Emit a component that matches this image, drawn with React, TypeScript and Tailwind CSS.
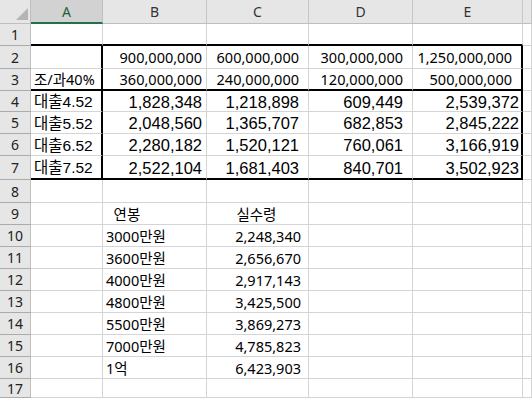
import React from "react";

const ROW_H = [22, 23, 22, 21, 22, 22, 24, 23, 22, 22, 22, 22, 22, 22, 22, 22, 19];
const COLS = ["A", "B", "C", "D", "E", ""];

type Cell = { t?: string; align?: "l" | "r"; pr?: number; kind?: "a" | "b" | "k" };

const body = "font-['Noto_Sans','Noto_Sans_CJK_KR',sans-serif] text-[14.5px]";
const big = "font-['Liberation_Sans','Noto_Sans_CJK_KR',sans-serif] text-[16.5px]";
const label = "font-['Liberation_Sans','Noto_Sans_CJK_KR',sans-serif] text-[15.5px]";

const blank: Cell[] = [{}, {}, {}, {}, {}, {}];

const rows: Cell[][] = [
  blank,
  [{}, { t: "900,000,000", align: "r", pr: 4 }, { t: "600,000,000", align: "r", pr: 9 }, { t: "300,000,000", align: "r", pr: 9 }, { t: "1,250,000,000", align: "r", pr: 9 }, {}],
  [{ t: "조/과40%" }, { t: "360,000,000", align: "r", pr: 4 }, { t: "240,000,000", align: "r", pr: 9 }, { t: "120,000,000", align: "r", pr: 9 }, { t: "500,000,000", align: "r", pr: 9 }, {}],
  [{ t: "대출4.52", kind: "k" }, { t: "1,828,348", align: "r", pr: 4, kind: "b" }, { t: "1,218,898", align: "r", pr: 9, kind: "b" }, { t: "609,449", align: "r", pr: 9, kind: "b" }, { t: "2,539,372", align: "r", pr: 2, kind: "b" }, {}],
  [{ t: "대출5.52", kind: "k" }, { t: "2,048,560", align: "r", pr: 4, kind: "b" }, { t: "1,365,707", align: "r", pr: 9, kind: "b" }, { t: "682,853", align: "r", pr: 9, kind: "b" }, { t: "2,845,222", align: "r", pr: 2, kind: "b" }, {}],
  [{ t: "대출6.52", kind: "k" }, { t: "2,280,182", align: "r", pr: 4, kind: "b" }, { t: "1,520,121", align: "r", pr: 9, kind: "b" }, { t: "760,061", align: "r", pr: 9, kind: "b" }, { t: "3,166,919", align: "r", pr: 2, kind: "b" }, {}],
  [{ t: "대출7.52", kind: "k" }, { t: "2,522,104", align: "r", pr: 4, kind: "b" }, { t: "1,681,403", align: "r", pr: 9, kind: "b" }, { t: "840,701", align: "r", pr: 9, kind: "b" }, { t: "3,502,923", align: "r", pr: 2, kind: "b" }, {}],
  blank,
  [{}, { t: "\u00a0\u00a0연봉" }, { t: "\u00a0\u00a0\u00a0\u00a0\u00a0\u00a0\u00a0실수령" }, {}, {}, {}],
  [{}, { t: "3000만원" }, { t: "2,248,340", align: "r", pr: 7 }, {}, {}, {}],
  [{}, { t: "3600만원" }, { t: "2,656,670", align: "r", pr: 7 }, {}, {}, {}],
  [{}, { t: "4000만원" }, { t: "2,917,143", align: "r", pr: 7 }, {}, {}, {}],
  [{}, { t: "4800만원" }, { t: "3,425,500", align: "r", pr: 7 }, {}, {}, {}],
  [{}, { t: "5500만원" }, { t: "3,869,273", align: "r", pr: 7 }, {}, {}, {}],
  [{}, { t: "7000만원" }, { t: "4,785,823", align: "r", pr: 7 }, {}, {}, {}],
  [{}, { t: "1억" }, { t: "6,423,903", align: "r", pr: 7 }, {}, {}, {}],
  blank,
];

function borders(r: number, c: number) {
  // r: 1-based row, c: 0..5 (A..F)
  const inBox = c <= 4;
  const thickBottom = inBox && (r === 1 || r === 3 || r === 7);
  const thickRight = (c === 0 || c === 4) && r >= 2 && r <= 7;
  return [
    thickBottom ? "border-b-2 border-b-black" : "border-b border-b-[#d4d4d4]",
    thickRight ? "border-r-2 border-r-black" : "border-r border-r-[#d4d4d4]",
  ].join(" ");
}

function fontFor(kind?: Cell["kind"]) {
  if (kind === "b") return big;
  if (kind === "k") return label;
  return body;
}

export default function App() {
  return (
    <div className="w-[532px] h-[398px] overflow-hidden bg-white text-black">
      <div className="grid grid-cols-[31px_72px_104px_102px_104px_110px_1fr]">
        {/* corner */}
        <div className="h-[24px] bg-[#e6e6e6] border-r border-b border-[#bfbfbf] relative">
          <svg className="absolute right-[2px] bottom-[3px]" width="12" height="12" viewBox="0 0 12 12">
            <polygon points="12,0 12,12 0,12" fill="#b4b4b4" />
          </svg>
        </div>
        {COLS.map((c, i) =>
          i === 0 ? (
            <div
              key={c}
              className="h-[24px] bg-[#d2d2d2] border-r border-r-[#bfbfbf] border-b-2 border-b-[#217346] flex items-center justify-center font-['Noto_Sans',sans-serif] text-[14px] text-[#1d5e3a]"
            >
              {c}
            </div>
          ) : (
            <div
              key={i}
              className="h-[24px] bg-[#e6e6e6] border-r border-r-[#c6c6c6] border-b border-b-[#bfbfbf] flex items-center justify-center font-['Noto_Sans',sans-serif] text-[14px] text-[#333]"
            >
              {c}
            </div>
          )
        )}
        {rows.map((row, ri) => {
          const r = ri + 1;
          const h = ROW_H[ri];
          return (
            <React.Fragment key={r}>
              <div
                style={{ height: h }}
                className="bg-[#e6e6e6] border-r border-r-[#bfbfbf] border-b border-b-[#ababab] flex items-center justify-center font-['Noto_Sans',sans-serif] text-[14px] text-[#222]"
              >
                {r}
              </div>
              {row.map((cell, ci) => (
                <div
                  key={ci}
                  style={{ height: h, paddingRight: cell.pr ?? 0 }}
                  className={`${borders(r, ci)} flex items-center whitespace-nowrap pt-[2px] pl-[3px] ${
                    cell.align === "r" ? "justify-end" : "justify-start"
                  } ${fontFor(cell.kind)}`}
                >
                  {cell.t}
                </div>
              ))}
            </React.Fragment>
          );
        })}
      </div>
    </div>
  );
}
